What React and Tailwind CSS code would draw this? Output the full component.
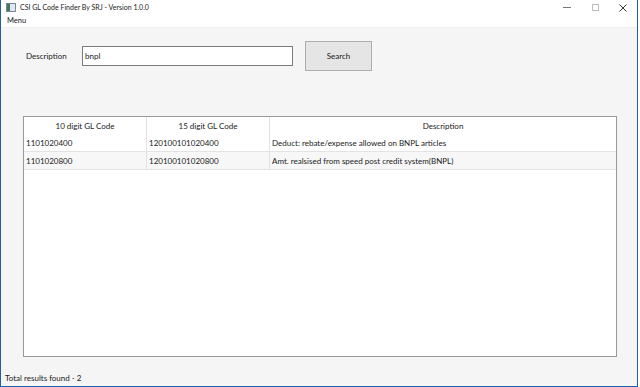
export default function App() {
  const font = { fontFamily: 'Lato, "Noto Sans", sans-serif' };
  const rows = [
    ["1101020400", "120100101020400", "Deduct: rebate/expense allowed on BNPL articles"],
    ["1101020800", "120100101020800", "Amt. realsised from speed post credit system(BNPL)"],
  ];
  return (
    <div className="w-[640px] h-[387px] bg-white flex text-[8px] text-[#1a1a1a] overflow-hidden" style={font}>
      <div className="w-[638px] h-[387px] flex flex-col border-l border-b border-r-[1px] border-[#1f5fa8] bg-[#f5f5f5]">
        {/* title bar */}
        <div className="h-[15px] bg-white flex items-center">
          <div className="ml-[5px] w-[10px] h-[9px] border border-[#7a8a9a] bg-[#dfe8f0] flex">
            <div className="w-[3px] bg-[#3c7a5a]"></div>
          </div>
          <span className="ml-[4px] leading-none text-[7px]">CSI GL Code Finder By SRJ - Version 1.0.0</span>
          <div className="ml-auto flex items-center h-full">
            <div className="w-[28px] flex justify-center"><div className="w-[8px] h-px bg-[#777]"></div></div>
            <div className="w-[28px] flex justify-center"><div className="w-[7px] h-[7px] border border-[#bbb]"></div></div>
            <div className="w-[28px] flex justify-center">
              <svg width="8" height="8" viewBox="0 0 8 8"><path d="M0.5 0.5L7.5 7.5M7.5 0.5L0.5 7.5" stroke="#333" strokeWidth="1" /></svg>
            </div>
          </div>
        </div>
        {/* menu bar */}
        <div className="h-[13px] bg-white flex items-center border-b border-[#f0f0f0]">
          <span className="ml-[6px] leading-none text-[7.5px]">Menu</span>
        </div>
        {/* search row */}
        <div className="flex items-center pt-[13px] h-[43px]">
          <span className="ml-[25px] w-[56px] leading-none">Description</span>
          <div className="w-[211px] h-[20px] bg-white border border-[#7a7a7a] flex items-center pl-[2px]">bnpl</div>
          <div className="ml-[12px] w-[67px] h-[30px] bg-[#e5e5e5] border border-[#adadad] flex items-center justify-center">Search</div>
        </div>
        {/* table */}
        <div className="mt-[45px] ml-[22px] w-[594px] h-[241px] bg-white border border-[#999] flex flex-col">
          <div className="flex h-[17px] items-center">
            <div className="w-[123px] h-full border-r border-[#e3e3e3] flex items-center justify-center">10 digit GL Code</div>
            <div className="w-[123px] h-full border-r border-[#e3e3e3] flex items-center justify-center">15 digit GL Code</div>
            <div className="flex-1 h-full flex items-center justify-center">Description</div>
          </div>
          {rows.map((r, i) => (
            <div key={i} className={`flex h-[18px] border-b border-[#e3e3e3] ${i === 1 ? "bg-[#f7f7f7]" : "bg-white"}`}>
              <div className="w-[123px] h-full border-r border-[#e3e3e3] flex items-center pl-[2px]">{r[0]}</div>
              <div className="w-[123px] h-full border-r border-[#e3e3e3] flex items-center pl-[2px]">{r[1]}</div>
              <div className="flex-1 h-full flex items-center pl-[2px]">{r[2]}</div>
            </div>
          ))}
        </div>
        {/* status */}
        <div className="mt-auto h-[14px] flex items-center pl-[4px] pb-[3px]">
          <span className="leading-none">Total results found - 2</span>
        </div>
      </div>
    </div>
  );
}
